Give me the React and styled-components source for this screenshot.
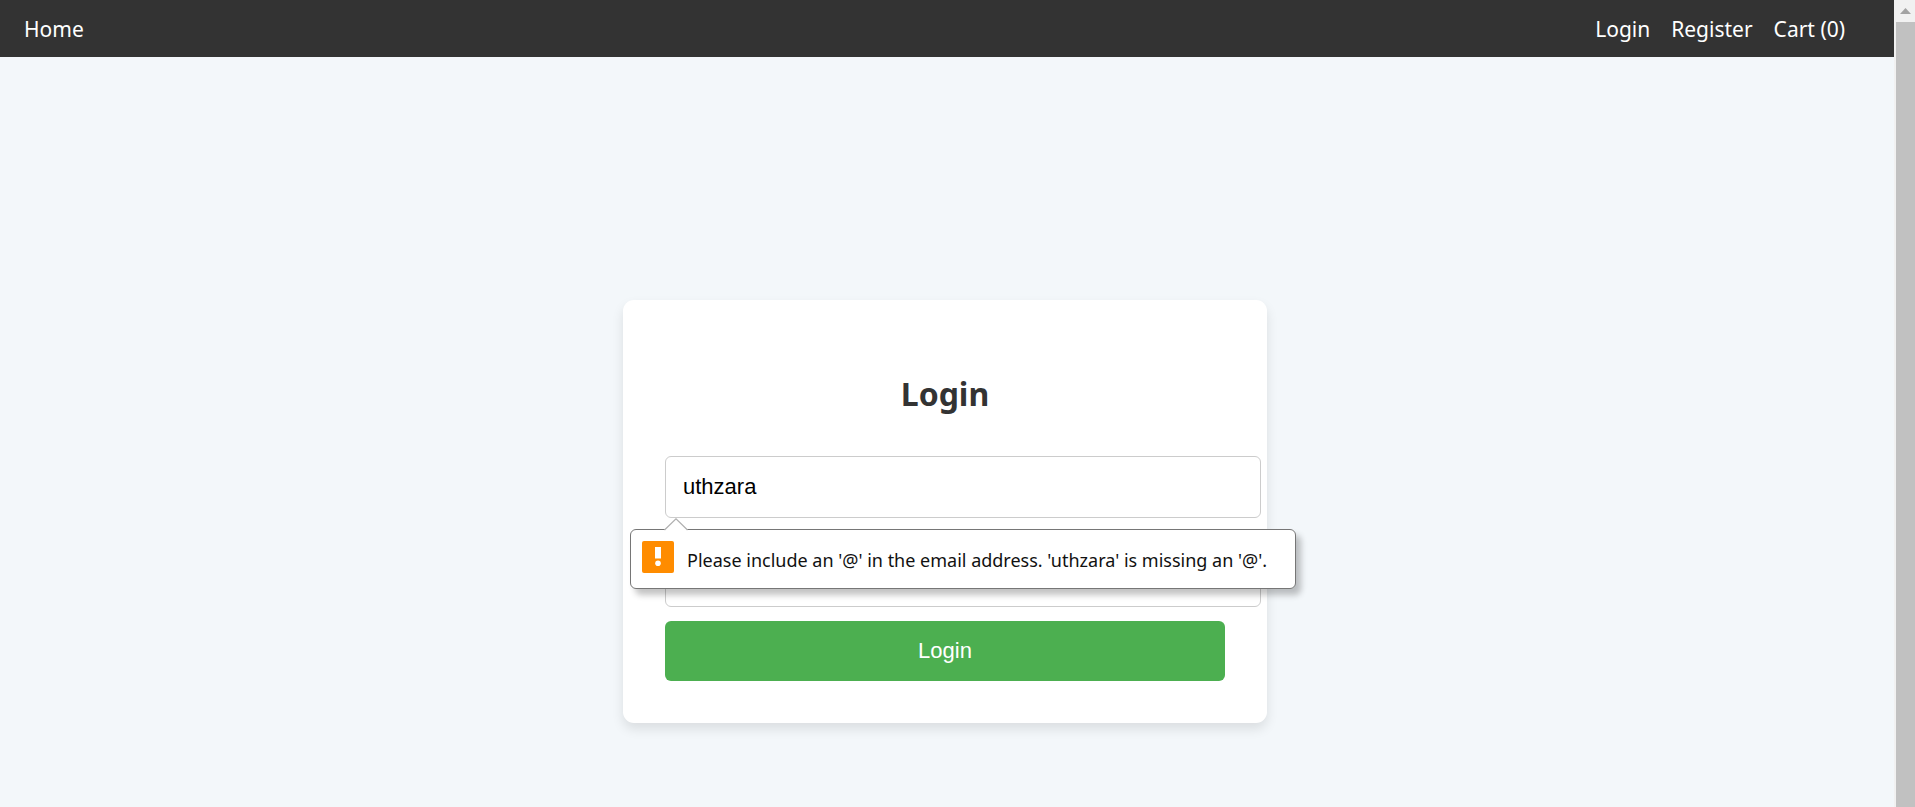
import React from "react";
import styled, { createGlobalStyle } from "styled-components";

const GlobalStyle = createGlobalStyle`
  *, *::before, *::after { box-sizing: border-box; }
  html, body { margin: 0; overflow: hidden; }
  body {
    background: #f3f7fa;
    color: #333;
    font-family: "Segoe UI", "Noto Sans", "Open Sans", sans-serif;
  }
`;

const Shell = styled.div`
  display: flex;
  height: 100vh;
`;

const Page = styled.div`
  flex: 1;
  min-width: 0;
  overflow: hidden;
`;

const Nav = styled.nav`
  display: flex;
  align-items: center;
  justify-content: space-between;
  padding: 15px 49px 14px 24px;
  background: #333;
`;

const NavLinks = styled.div`
  display: flex;
  gap: 21px;
`;

const NavLink = styled.a`
  color: #fff;
  font-size: 21px;
  line-height: 28px;
  text-decoration: none;
`;

const Main = styled.main`
  display: flex;
  justify-content: center;
  padding: 243px 4px 243px 0;
`;

const Card = styled.form`
  width: 644px;
  padding: 42px;
  border-radius: 11px;
  background: #fff;
  box-shadow: 0 6px 12px rgba(0, 0, 0, 0.1);
`;

const Title = styled.h2`
  margin: 28px 0;
  color: #333;
  font-size: 32px;
  font-weight: 700;
  line-height: 48px;
  text-align: center;
`;

const Fields = styled.div`
  display: flex;
  flex-direction: column;
  gap: 27px;
  padding-top: 10px;
`;

const Field = styled.div`
  position: relative;
  display: flex;
`;

const TextInput = styled.input`
  flex: none;
  width: calc(100% + 36px);
  height: 62px;
  padding: 0 17px;
  border: 1px solid #ccc;
  border-radius: 6px;
  outline: none;
  background: #fff;
  color: #000;
  font-family: Arial, "Liberation Sans", sans-serif;
  font-size: 22px;
`;

const SubmitButton = styled.button`
  display: block;
  width: 100%;
  height: 60px;
  margin-top: 14px;
  padding: 0;
  border: 0;
  border-radius: 6px;
  background: #4caf50;
  color: #fff;
  font-family: Arial, "Liberation Sans", sans-serif;
  font-size: 22px;
`;

const Bubble = styled.div`
  position: absolute;
  z-index: 1;
  top: 73px;
  left: -35px;
  display: flex;
  gap: 13px;
  width: 666px;
  height: 60px;
  padding: 11px;
  border: 1px solid #767676;
  border-radius: 6px;
  background: #fff;
  box-shadow: 5px 6px 6px rgba(0, 0, 0, 0.24);
`;

const BubbleArrow = styled.svg`
  position: absolute;
  top: -12px;
  left: 33px;
`;

const WarningIcon = styled.svg`
  flex: none;
`;

const BubbleText = styled.span`
  padding-top: 6px;
  color: #111;
  font-size: 18px;
  line-height: 26px;
  white-space: nowrap;
`;

const Scrollbar = styled.div`
  display: flex;
  flex-direction: column;
  width: 21px;
  padding-left: 2px;
  background: #f1f1f1;
`;

const ScrollArrow = styled.svg`
  flex: none;
  display: block;
`;

const ScrollThumb = styled.div`
  flex: 1;
  background: #c1c1c1;
`;

function ValidationBubble({ children }) {
  return (
    <Bubble role="alert">
      <BubbleArrow width="24" height="13" viewBox="0 0 24 13" aria-hidden="true">
        <path d="M0.5 13V12L12 0.8L23.5 12V13Z" fill="#fff" />
        <path d="M0.5 12L12 0.8L23.5 12" fill="none" stroke="#b0b0b0" strokeWidth="1.2" />
      </BubbleArrow>
      <WarningIcon width="32" height="32" viewBox="0 0 32 32" aria-hidden="true">
        <rect width="32" height="32" rx="2" fill="#ff8c00" />
        <path d="M13 6h6v11.500h-6z" fill="#fff" />
        <circle cx="16" cy="22.300" r="2.800" fill="#fff" />
      </WarningIcon>
      <BubbleText>{children}</BubbleText>
    </Bubble>
  );
}

export default function App() {
  return (
    <>
      <GlobalStyle />
      <Shell>
        <Page>
          <Nav>
            <NavLink href="#home">Home</NavLink>
            <NavLinks>
              <NavLink href="#login">Login</NavLink>
              <NavLink href="#register">Register</NavLink>
              <NavLink href="#cart">Cart (0)</NavLink>
            </NavLinks>
          </Nav>
          <Main>
            <Card noValidate onSubmit={(event) => event.preventDefault()}>
              <Title>Login</Title>
              <Fields>
                <Field>
                  <TextInput type="email" aria-label="Email" defaultValue="uthzara" />
                  <ValidationBubble>
                    Please include an '@' in the email address. 'uthzara' is missing an '@'.
                  </ValidationBubble>
                </Field>
                <Field>
                  <TextInput type="password" aria-label="Password" />
                </Field>
              </Fields>
              <SubmitButton type="submit">Login</SubmitButton>
            </Card>
          </Main>
        </Page>
        <Scrollbar aria-hidden="true">
          <ScrollArrow width="19" height="22" viewBox="0 0 19 22">
            <path d="M4 14L9.500 8L15 14Z" fill="#a3a3a3" />
          </ScrollArrow>
          <ScrollThumb />
        </Scrollbar>
      </Shell>
    </>
  );
}
